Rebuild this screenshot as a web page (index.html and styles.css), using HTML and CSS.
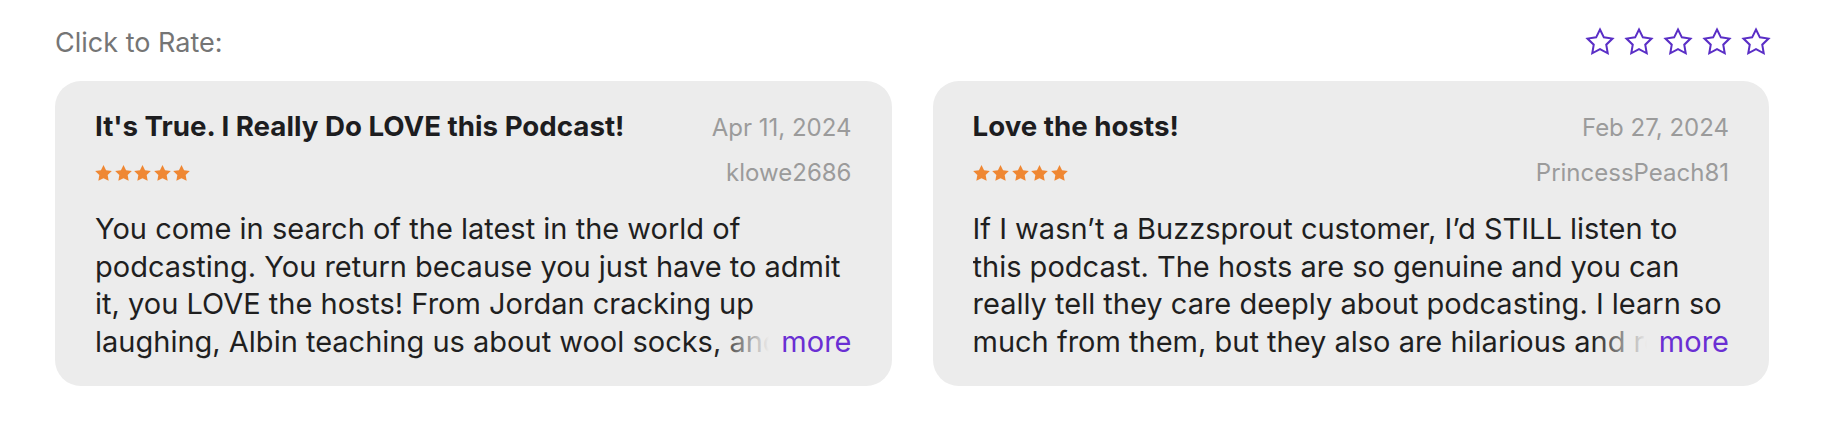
FILE: index.html
```html
<!DOCTYPE html>
<html lang="en">
<head>
  <meta charset="UTF-8">
  <meta name="viewport" content="width=device-width, initial-scale=1.0">
  <title>Ratings &amp; Reviews</title>
  <link rel="stylesheet" href="styles.css">
</head>
<body>
  <div class="page">
    <div class="rate-bar">
      <span class="rate-label">Click to Rate:</span>
      <div class="rate-stars">
        <svg class="rate-star" viewBox="0 0 24 24"><polygon points="12,2 15.09,8.26 22,9.27 17,14.14 18.18,21.02 12,17.77 5.82,21.02 7,14.14 2,9.27 8.91,8.26"/></svg>
        <svg class="rate-star" viewBox="0 0 24 24"><polygon points="12,2 15.09,8.26 22,9.27 17,14.14 18.18,21.02 12,17.77 5.82,21.02 7,14.14 2,9.27 8.91,8.26"/></svg>
        <svg class="rate-star" viewBox="0 0 24 24"><polygon points="12,2 15.09,8.26 22,9.27 17,14.14 18.18,21.02 12,17.77 5.82,21.02 7,14.14 2,9.27 8.91,8.26"/></svg>
        <svg class="rate-star" viewBox="0 0 24 24"><polygon points="12,2 15.09,8.26 22,9.27 17,14.14 18.18,21.02 12,17.77 5.82,21.02 7,14.14 2,9.27 8.91,8.26"/></svg>
        <svg class="rate-star" viewBox="0 0 24 24"><polygon points="12,2 15.09,8.26 22,9.27 17,14.14 18.18,21.02 12,17.77 5.82,21.02 7,14.14 2,9.27 8.91,8.26"/></svg>
      </div>
    </div>

    <div class="reviews">
      <article class="review">
        <div class="review-head">
          <h3 class="review-title">It's True. I Really Do LOVE this Podcast!</h3>
          <span class="review-date">Apr 11, 2024</span>
        </div>
        <div class="review-meta">
          <div class="stars">
            <svg viewBox="2 2 20 19.2"><polygon points="12,2 15.09,8.26 22,9.27 17,14.14 18.18,21.02 12,17.77 5.82,21.02 7,14.14 2,9.27 8.91,8.26"/></svg>
            <svg viewBox="2 2 20 19.2"><polygon points="12,2 15.09,8.26 22,9.27 17,14.14 18.18,21.02 12,17.77 5.82,21.02 7,14.14 2,9.27 8.91,8.26"/></svg>
            <svg viewBox="2 2 20 19.2"><polygon points="12,2 15.09,8.26 22,9.27 17,14.14 18.18,21.02 12,17.77 5.82,21.02 7,14.14 2,9.27 8.91,8.26"/></svg>
            <svg viewBox="2 2 20 19.2"><polygon points="12,2 15.09,8.26 22,9.27 17,14.14 18.18,21.02 12,17.77 5.82,21.02 7,14.14 2,9.27 8.91,8.26"/></svg>
            <svg viewBox="2 2 20 19.2"><polygon points="12,2 15.09,8.26 22,9.27 17,14.14 18.18,21.02 12,17.77 5.82,21.02 7,14.14 2,9.27 8.91,8.26"/></svg>
          </div>
          <span class="review-author">klowe2686</span>
        </div>
        <div class="review-body">
          <p>You come in search of the latest in the world of podcasting. You return because you just have to admit it, you LOVE the hosts! From Jordan cracking up laughing, Albin teaching us about wool socks, and Alban keeping everyone on track, every episode feels like hanging out with friends.</p>
          <a href="#" class="more">more</a>
        </div>
      </article>

      <article class="review">
        <div class="review-head">
          <h3 class="review-title">Love the hosts!</h3>
          <span class="review-date">Feb 27, 2024</span>
        </div>
        <div class="review-meta">
          <div class="stars">
            <svg viewBox="2 2 20 19.2"><polygon points="12,2 15.09,8.26 22,9.27 17,14.14 18.18,21.02 12,17.77 5.82,21.02 7,14.14 2,9.27 8.91,8.26"/></svg>
            <svg viewBox="2 2 20 19.2"><polygon points="12,2 15.09,8.26 22,9.27 17,14.14 18.18,21.02 12,17.77 5.82,21.02 7,14.14 2,9.27 8.91,8.26"/></svg>
            <svg viewBox="2 2 20 19.2"><polygon points="12,2 15.09,8.26 22,9.27 17,14.14 18.18,21.02 12,17.77 5.82,21.02 7,14.14 2,9.27 8.91,8.26"/></svg>
            <svg viewBox="2 2 20 19.2"><polygon points="12,2 15.09,8.26 22,9.27 17,14.14 18.18,21.02 12,17.77 5.82,21.02 7,14.14 2,9.27 8.91,8.26"/></svg>
            <svg viewBox="2 2 20 19.2"><polygon points="12,2 15.09,8.26 22,9.27 17,14.14 18.18,21.02 12,17.77 5.82,21.02 7,14.14 2,9.27 8.91,8.26"/></svg>
          </div>
          <span class="review-author">PrincessPeach81</span>
        </div>
        <div class="review-body">
          <p>If I wasn’t a Buzzsprout customer, I’d STILL listen to this podcast. The hosts are so genuine and you can really tell they care deeply about podcasting. I learn so much from them, but they also are hilarious and really fun to listen to every single week.</p>
          <a href="#" class="more">more</a>
        </div>
      </article>
    </div>
  </div>
</body>
</html>
```

FILE: styles.css
```css
* {margin: 0; padding: 0; box-sizing: border-box;}

body {
  font-family: Inter, "Noto Sans", sans-serif;
  color: #1f1f1f;
  background-color: #fff;
}
a {
  text-decoration: none;
}

.page {
  padding: 24px 73px 0 55px;
}

/* top row: label + empty stars */
.rate-bar {
  display: flex;
  justify-content: space-between;
  align-items: center;
  height: 36px;
}
.rate-label {
  font-size: 27px;
  color: #757575;
}
.rate-stars {
  display: flex;
  gap: 13px;
}
.rate-star {
  width: 30px;
  height: 30px;
  margin: 0 -2px;
  fill: none;
  stroke: #5a2ec6;
  stroke-width: 1.6;
}

/* review cards */
.reviews {
  display: grid;
  grid-template-columns: 1fr 1fr;
  gap: 41px;
  margin-top: 21px;
}
.review {
  background-color: #ececec;
  border-radius: 26px;
  padding: 29px 40px 26px;
}
.review-head {
  display: flex;
  justify-content: space-between;
  align-items: baseline;
}
.review-title {
  font-size: 27.7px;
  line-height: 32px;
  font-weight: 700;
  color: #1d1d1f;
}
.review-date,
.review-author {
  font-size: 24px;
  line-height: 28px;
  color: #9b9b9b;
}
.review-meta {
  display: flex;
  justify-content: space-between;
  align-items: center;
  margin-top: 17px;
}
.stars {
  display: flex;
  gap: 2.5px;
}
.stars svg {
  width: 17px;
  height: 16px;
  fill: #ef8733;
}

.review-body {
  position: relative;
  margin-top: 23px;
  height: 150px;
  overflow: hidden;
  font-size: 29px;
  line-height: 37.5px;
}
/* fade the cut off line under the link */
.more {
  position: absolute;
  right: 0;
  bottom: 0;
  padding-left: 66px;
  line-height: 37.5px;
  color: #6a2fd3;
  background: linear-gradient(to right, rgba(236,236,236,0), #ececec 54px);
}
```
